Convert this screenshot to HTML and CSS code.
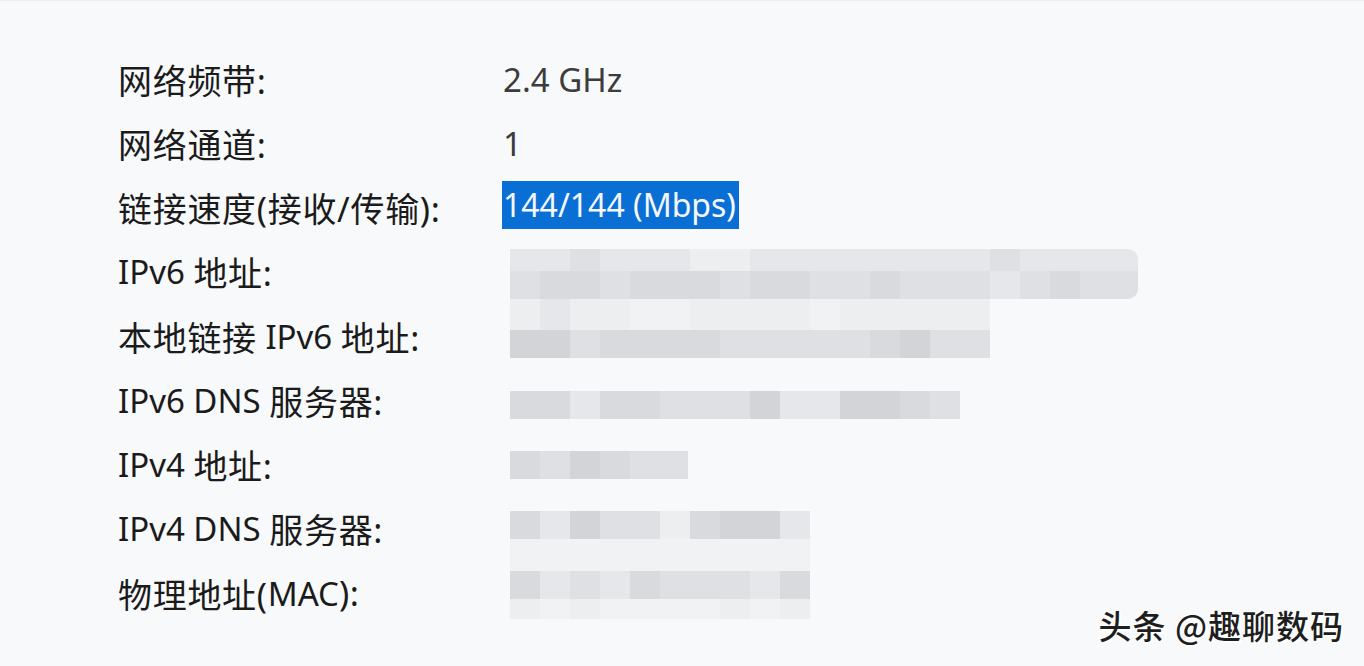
FILE: index.html
```html
<!DOCTYPE html>
<html lang="zh-CN">
<head>
<meta charset="utf-8">
<title>网络属性</title>
<link rel="stylesheet" href="styles.css">
</head>
<body>
<div class="panel">
  <div class="props">
    <div class="label">网络频带:</div>
    <div class="value">2.4 GHz</div>

    <div class="label">网络通道:</div>
    <div class="value">1</div>

    <div class="label">链接速度(接收/传输):</div>
    <div class="value"><span class="selected">144/144 (Mbps)</span></div>

    <div class="label"><span class="lat">IPv6 </span>地址:</div>
    <div class="value">
      <div class="mosaic m-ipv6">
        <div class="strip tall-top round">
          <i class="s4"></i><i class="s4"></i><i class="s3"></i><i class="s4"></i><i class="s4"></i><i class="s4"></i><i class="s5"></i><i class="s5"></i><i class="s4"></i><i class="s4"></i><i class="s4"></i><i class="s4"></i><i class="s4"></i><i class="s4"></i><i class="s4"></i><i class="s4"></i><i class="s3"></i><i class="s4"></i><i class="s4"></i><i class="s4"></i><i class="s4"></i>
        </div>
        <div class="strip round-bottom">
          <i class="s3"></i><i class="s2"></i><i class="s2"></i><i class="s3"></i><i class="s2"></i><i class="s2"></i><i class="s2"></i><i class="s3"></i><i class="s2"></i><i class="s2"></i><i class="s3"></i><i class="s3"></i><i class="s2"></i><i class="s3"></i><i class="s3"></i><i class="s3"></i><i class="s4"></i><i class="s3"></i><i class="s2"></i><i class="s3"></i><i class="s3"></i>
        </div>
      </div>
    </div>

    <div class="label">本地链接<span class="lat"> IPv6 </span>地址:</div>
    <div class="value">
      <div class="mosaic m-link">
        <div class="strip faint">
          <i class="s5"></i><i class="s4"></i><i class="s5"></i><i class="s5"></i><i class="s6"></i><i class="s6"></i><i class="s5"></i><i class="s5"></i><i class="s5"></i><i class="s5"></i><i class="s6"></i><i class="s5"></i><i class="s5"></i><i class="s5"></i><i class="s5"></i><i class="s5"></i>
        </div>
        <div class="strip">
          <i class="s1"></i><i class="s1"></i><i class="s3"></i><i class="s2"></i><i class="s2"></i><i class="s2"></i><i class="s2"></i><i class="s3"></i><i class="s3"></i><i class="s3"></i><i class="s3"></i><i class="s3"></i><i class="s2"></i><i class="s1"></i><i class="s3"></i><i class="s3"></i>
        </div>
      </div>
    </div>

    <div class="label"><span class="lat">IPv6 DNS </span>服务器:</div>
    <div class="value">
      <div class="mosaic m-dns6">
        <div class="strip">
          <i class="s2"></i><i class="s2"></i><i class="s4"></i><i class="s2"></i><i class="s2"></i><i class="s3"></i><i class="s3"></i><i class="s3"></i><i class="s1"></i><i class="s4"></i><i class="s4"></i><i class="s1"></i><i class="s1"></i><i class="s2"></i><i class="s3"></i>
        </div>
      </div>
    </div>

    <div class="label"><span class="lat">IPv4 </span>地址:</div>
    <div class="value">
      <div class="mosaic m-ipv4">
        <div class="strip">
          <i class="s2"></i><i class="s3"></i><i class="s1"></i><i class="s2"></i><i class="s3"></i><i class="s3"></i>
        </div>
      </div>
    </div>

    <div class="label"><span class="lat">IPv4 DNS </span>服务器:</div>
    <div class="value">
      <div class="mosaic m-dns4">
        <div class="strip">
          <i class="s2"></i><i class="s4"></i><i class="s1"></i><i class="s3"></i><i class="s3"></i><i class="s5"></i><i class="s2"></i><i class="s1"></i><i class="s1"></i><i class="s4"></i>
        </div>
        <div class="strip faint tall">
          <i class="s6"></i><i class="s6"></i><i class="s6"></i><i class="s6"></i><i class="s6"></i><i class="s6"></i><i class="s6"></i><i class="s6"></i><i class="s6"></i><i class="s6"></i>
        </div>
      </div>
    </div>

    <div class="label">物理地址(<span class="lat">MAC</span>):</div>
    <div class="value">
      <div class="mosaic m-mac">
        <div class="strip">
          <i class="s2"></i><i class="s4"></i><i class="s3"></i><i class="s4"></i><i class="s2"></i><i class="s3"></i><i class="s3"></i><i class="s3"></i><i class="s4"></i><i class="s2"></i>
        </div>
        <div class="strip faint short">
          <i class="s5"></i><i class="s6"></i><i class="s5"></i><i class="s6"></i><i class="s6"></i><i class="s6"></i><i class="s6"></i><i class="s5"></i><i class="s6"></i><i class="s5"></i>
        </div>
      </div>
    </div>
  </div>

  <div class="watermark">头条 @趣聊数码</div>
</div>
</body>
</html>
```

FILE: styles.css
```css
html, body {
  margin: 0;
  padding: 0;
  background: #f8f9fb;
}

.panel {
  position: relative;
  width: 1364px;
  height: 666px;
  box-sizing: border-box;
  border-top: 1px solid #eceef1;
  padding: 46px 0 0 118px;
  font-family: "Noto Sans", "Noto Sans CJK SC", sans-serif;
  font-size: 33px;
  overflow: hidden;
}

.props {
  display: grid;
  grid-template-columns: 385px 1fr;
  grid-auto-rows: 64.25px;
}

.label {
  color: #1b1b1b;
  font-size: 34px;
  letter-spacing: 0.7px;
  display: flex;
  align-items: center;
  white-space: pre;
}

.label .lat {
  font-size: 33px;
  letter-spacing: 0;
}

.value {
  color: #3c3c3c;
  display: flex;
  align-items: center;
  white-space: nowrap;
}

.selected {
  display: inline-block;
  background: #0a6fd4;
  color: #f4f8fd;
  font-size: 32px;
  line-height: 48px;
  height: 48px;
  padding: 0 3px 0 1px;
  margin-left: -1px;
  margin-top: -6px;
}

.mosaic {
  display: flex;
  flex-direction: column;
  margin-left: 7px;
  align-self: flex-start;
}

.strip {
  display: flex;
  height: 28px;
}

.strip i {
  display: block;
  width: 30px;
  height: 100%;
}

.strip.tall-top { height: 22px; }
.strip.faint { height: 31px; }
.strip.faint.tall { height: 32px; }
.strip.faint.short { height: 20px; }

.round i:last-child { border-top-right-radius: 10px; }
.round-bottom i:last-child { border-bottom-right-radius: 10px; }

.m-ipv6 { margin-top: 9px; }
.m-ipv6 .strip i:last-child { width: 28px; }
.m-link { margin-top: -5px; }
.m-dns6 { margin-top: 23px; }
.m-ipv4 { margin-top: 18px; }
.m-ipv4 .strip i:last-child { width: 28px; }
.m-dns4 { margin-top: 14px; }
.m-mac { margin-top: 10px; }

.s1 { background: #d3d4d7; }
.s2 { background: #d9dadd; }
.s3 { background: #dfe0e3; }
.s4 { background: #e6e7ea; }
.s5 { background: #edeef0; }
.s6 { background: #f1f2f4; }

.watermark {
  position: absolute;
  right: 20px;
  bottom: 17px;
  font-family: "Noto Sans CJK SC", sans-serif;
  font-size: 33px;
  font-weight: 500;
  color: #1e1e1e;
  letter-spacing: 1px;
  text-shadow: 2px 2px 0 #ffffff, -1px -1px 0 #ffffff;
}
```
